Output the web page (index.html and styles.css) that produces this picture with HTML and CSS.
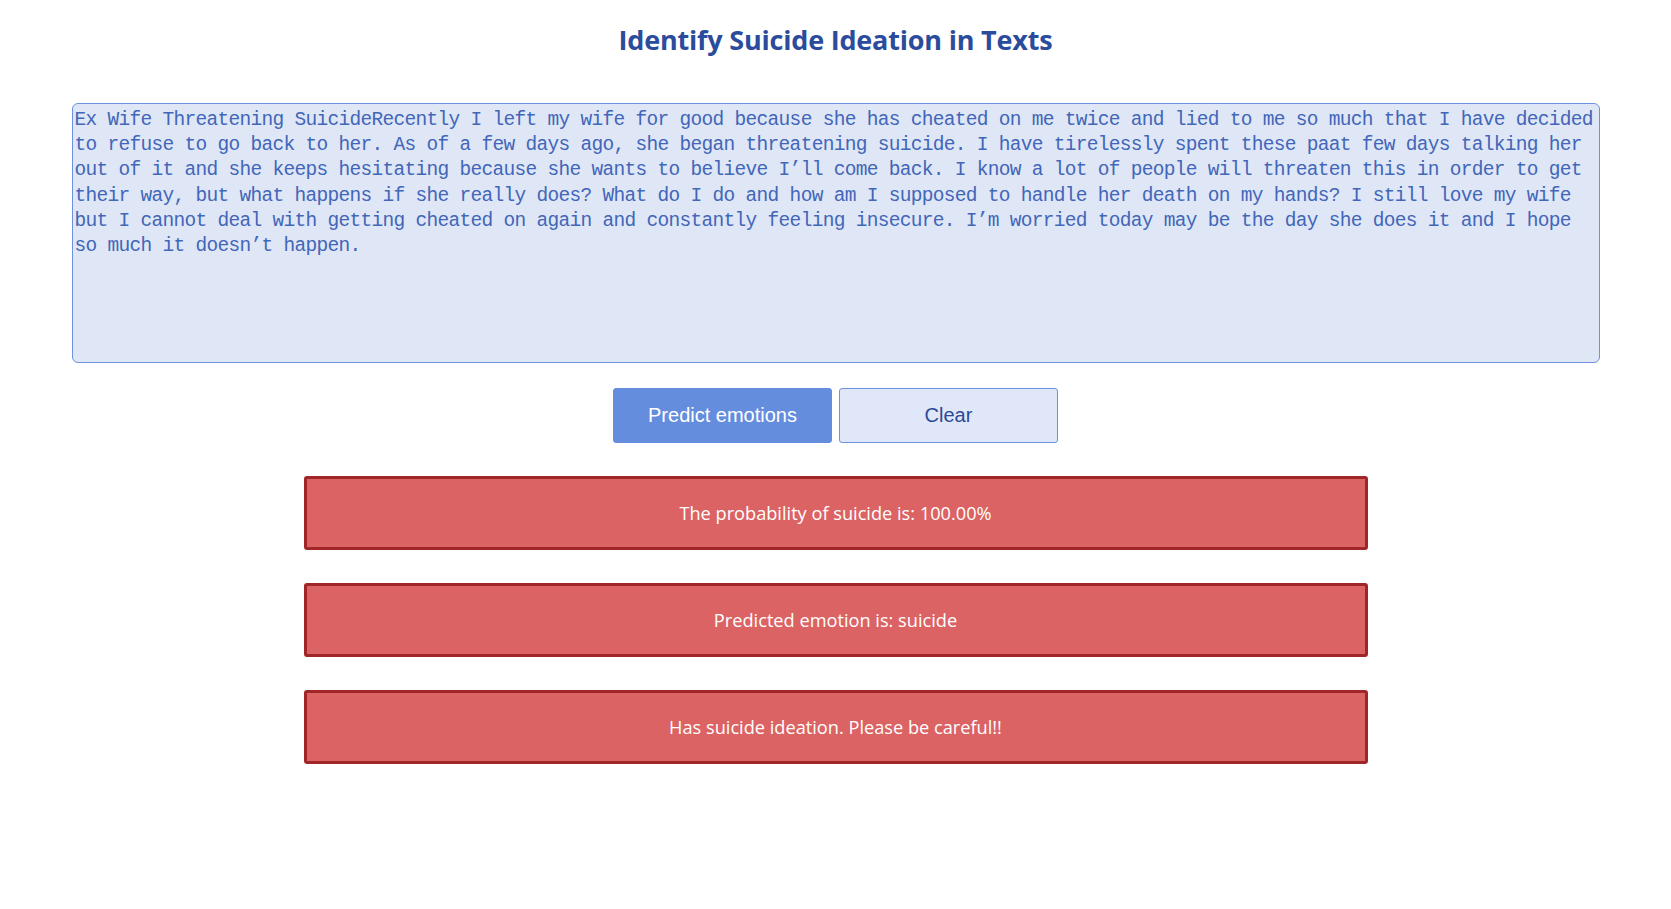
FILE: index.html
```html
<!DOCTYPE html>
<html lang="en">
<head>
<meta charset="utf-8">
<title>Identify Suicide Ideation in Texts</title>
<link rel="stylesheet" href="styles.css">
</head>
<body>
<main class="page">
  <h1 class="title">Identify Suicide Ideation in Texts</h1>
  <textarea class="input" spellcheck="false">Ex Wife Threatening SuicideRecently I left my wife for good because she has cheated on me twice and lied to me so much that I have decided to refuse to go back to her. As of a few days ago, she began threatening suicide. I have tirelessly spent these paat few days talking her out of it and she keeps hesitating because she wants to believe I’ll come back. I know a lot of people will threaten this in order to get their way, but what happens if she really does? What do I do and how am I supposed to handle her death on my hands? I still love my wife but I cannot deal with getting cheated on again and constantly feeling insecure. I’m worried today may be the day she does it and I hope so much it doesn’t happen.</textarea>
  <div class="actions">
    <button class="btn btn-primary" type="button">Predict emotions</button>
    <button class="btn btn-secondary" type="button">Clear</button>
  </div>
  <section class="results">
    <div class="result">The probability of suicide is: 100.00%</div>
    <div class="result">Predicted emotion is: suicide</div>
    <div class="result">Has suicide ideation. Please be careful!!</div>
  </section>
</main>
</body>
</html>
```

FILE: styles.css
```css
html, body {
  margin: 0;
  padding: 0;
  background: #ffffff;
}

body {
  font-family: "Open Sans", "Noto Sans", sans-serif;
}

.page {
  display: flex;
  flex-direction: column;
  align-items: center;
  padding-top: 23px;
}

.title {
  margin: 0;
  font-family: "Open Sans", "Noto Sans", sans-serif;
  font-weight: 700;
  font-size: 27px;
  line-height: 34px;
  color: #2b4c9c;
  letter-spacing: -0.2px;
}

.input {
  box-sizing: border-box;
  width: 1528px;
  height: 260px;
  margin-top: 46px;
  padding: 4px 2px 2px;
  border: 1px solid #6d91da;
  border-radius: 6px;
  background: #dfe7f7;
  color: #4266b8;
  font-family: "Liberation Mono", monospace;
  font-size: 19.5px;
  letter-spacing: -0.7px;
  line-height: 25.2px;
  resize: none;
  outline: none;
  overflow: hidden;
}

.actions {
  display: flex;
  gap: 7px;
  margin-top: 25px;
}

.btn {
  box-sizing: border-box;
  width: 219px;
  height: 55px;
  border-radius: 3px;
  font-family: "Liberation Sans", Arial, sans-serif;
  font-size: 20px;
  cursor: pointer;
}

.btn-primary {
  background: #658ddd;
  border: 1px solid #658ddd;
  color: #ffffff;
}

.btn-secondary {
  background: #dfe7f8;
  border: 1px solid #6d91da;
  color: #2c4a96;
}

.results {
  display: flex;
  flex-direction: column;
  gap: 33px;
  margin-top: 33px;
}

.result {
  box-sizing: border-box;
  width: 1064px;
  height: 74px;
  display: flex;
  align-items: center;
  justify-content: center;
  background: #db6363;
  border: 3px solid #a1262a;
  border-radius: 3px;
  color: #ffffff;
  font-family: "Open Sans", "Noto Sans", sans-serif;
  font-size: 18.2px;
}
```
